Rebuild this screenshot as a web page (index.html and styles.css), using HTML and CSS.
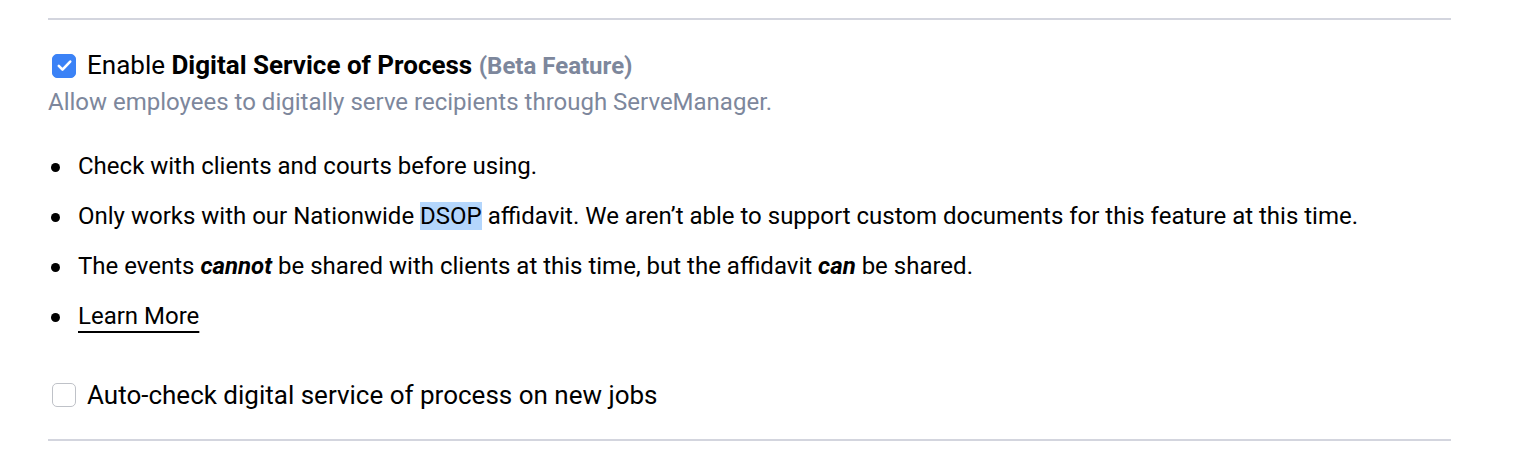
FILE: index.html
```html
<!DOCTYPE html>
<html>
<head>
<meta charset="utf-8">
<link rel="stylesheet" href="styles.css">
</head>
<body>
<div class="section">
  <div class="option">
    <label class="check-row">
      <span class="box checked"><svg viewBox="0 0 24 24" width="21" height="21"><path d="M5.5 12.5l4.2 4.2L18.5 7.5" fill="none" stroke="#fff" stroke-width="3" stroke-linecap="round" stroke-linejoin="round"/></svg></span>
      <span class="label">Enable <b>Digital Service of Process</b> <span class="beta">(Beta Feature)</span></span>
    </label>
    <p class="desc">Allow employees to digitally serve recipients through ServeManager.</p>
  </div>
  <ul class="notes">
    <li>Check with clients and courts before using.</li>
    <li>Only works with our Nationwide <span class="sel">DSOP</span> affidavit. We aren’t able to support custom documents for this feature at this time.</li>
    <li>The events <b><i>cannot</i></b> be shared with clients at this time, but the affidavit <b><i>can</i></b> be shared.</li>
    <li><a class="link" href="#">Learn More</a></li>
  </ul>
  <label class="check-row auto">
    <span class="box"></span>
    <span class="label">Auto-check digital service of process on new jobs</span>
  </label>
</div>
</body>
</html>
```
FILE: styles.css
```css
html, body { margin: 0; padding: 0; background: #fff; }
body {
  font-family: Roboto, "Helvetica Neue", Arial, sans-serif;
  color: #000;
  padding: 18px 0 0 48px;
}
.section {
  width: 1403px;
  border-top: 2px solid #d3d5de;
  border-bottom: 2px solid #d3d5de;
  padding: 30px 0 29px;
  box-sizing: border-box;
}
.check-row {
  display: flex;
  align-items: center;
  gap: 11px;
  padding-left: 4px;
  font-size: 26px;
  line-height: 30px;
}
.box {
  width: 24px;
  height: 24px;
  box-sizing: border-box;
  border: 1.5px solid #bfc2c8;
  border-radius: 5px;
  background: #fff;
  display: flex;
  align-items: center;
  justify-content: center;
  flex: none;
}
.box.checked { background: #3b82f6; border-color: #3b82f6; }
.label b { font-weight: 700; }
.beta { color: #7d879c; font-weight: 700; font-size: 24px; }
.desc {
  margin: 7px 0 0;
  font-size: 24px;
  line-height: 28px;
  color: #7d879c;
}
.notes {
  list-style: none;
  margin: 36px 0 0;
  padding: 0 0 0 30px;
  font-size: 24px;
  line-height: 28px;
}
.notes li { margin-bottom: 22px; position: relative; }
.notes li:last-child { margin-bottom: 0; }
.notes li::before {
  content: "";
  position: absolute;
  left: -27px;
  top: 11px;
  width: 9px;
  height: 9px;
  border-radius: 50%;
  background: #000;
}
.sel { background: #b4d6fc; }
.link {
  color: #000;
  text-decoration: underline;
  text-decoration-thickness: 2px;
  text-underline-offset: 7px;
}
.auto { margin-top: 50px; }
```
